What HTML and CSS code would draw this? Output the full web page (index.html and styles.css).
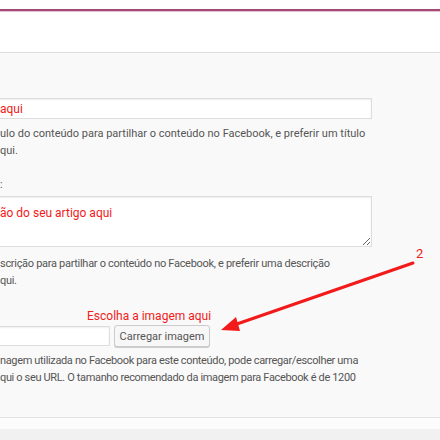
FILE: index.html
```html
<!DOCTYPE html>
<html lang="pt">
<head>
  <meta charset="UTF-8" />
  <meta name="viewport" content="width=device-width, initial-scale=1.0"/>
  <title>Facebook Open Graph</title>
  <link rel="stylesheet" href="styles.css">
</head>
<body>

  <div class="tabs">
    <div class="tab-line"></div>
  </div>

  <div class="panel">
    <div class="field field-title">
      <input type="text" class="text-input wide" value="aqui" />
      <p class="help">ulo do conteúdo para partilhar o conteúdo no Facebook, e preferir um título<br>qui.</p>
    </div>

    <div class="field field-desc">
      <label class="label">:</label>
      <textarea class="text-area">ão do seu artigo aqui</textarea>
      <p class="help">scrição para partilhar o conteúdo no Facebook, e preferir uma descrição<br>qui.</p>
    </div>

    <div class="field field-image">
      <div class="hint">Escolha a imagem aqui</div>
      <div class="upload-row">
        <input type="text" class="text-input short" />
        <button class="button">Carregar imagem</button>
      </div>
      <p class="help">nagem utilizada no Facebook para este conteúdo, pode carregar/escolher uma<br>qui o seu URL. O tamanho recomendado da imagem para Facebook é de 1200</p>
    </div>
  </div>
  <div class="footer-strip"></div>

  <!-- annotation arrow drawn over the form -->
  <div class="note">
    <span class="note-num">2</span>
    <svg class="note-arrow" width="440" height="440" viewBox="0 0 440 440">
      <line x1="413" y1="263" x2="234" y2="325" stroke="#f21a1a" stroke-width="3" stroke-linecap="round"/>
      <polygon points="221,330 236,317 240,331" fill="#f21a1a"/>
    </svg>
  </div>

</body>
</html>
```

FILE: styles.css
```css
body {
  margin: 0;
  background: #f1f1f1;
  font-family: Roboto, 'Open Sans', sans-serif;
  font-size: 11px;
  color: #555;
  overflow: hidden;
}

.tabs {
  background: #fff;
  height: 53px;
  padding-top: 9px;
  box-sizing: border-box;
  border-bottom: 1px solid #ddd;
}

.tab-line {
  height: 2px;
  background: #a24a78;
  border-bottom: 1px solid #e7bfd3;
}

.panel {
  background: #f9f9f9;
  height: 365px;
  box-sizing: border-box;
  padding-top: 45px;
  border-bottom: 1px solid #e3e3e3;
}

.field {
  margin-left: -4px;
}

.text-input {
  height: 21px;
  box-sizing: border-box;
  border: 1px solid #ddd;
  box-shadow: inset 0 1px 2px rgba(0, 0, 0, 0.07);
  background: #fff;
  font-family: inherit;
  font-size: 12px;
  color: #f21a1a;
  padding: 0 3px;
  outline: none;
}

.wide {
  display: block;
  width: 376px;
}

.short {
  width: 114px;
  height: 20px;
}

.help {
  margin: 6px 0 0 4px;
  line-height: 17px;
}

.label {
  display: block;
  margin: 18px 0 0 4px;
  height: 16px;
  line-height: 16px;
}

.text-area {
  display: block;
  margin-top: 3px;
  width: 376px;
  height: 51px;
  box-sizing: border-box;
  border: 1px solid #ddd;
  box-shadow: inset 0 1px 2px rgba(0, 0, 0, 0.07);
  background: #fff;
  font-family: inherit;
  font-size: 12px;
  color: #f21a1a;
  padding: 9px 3px;
  resize: vertical;
  outline: none;
}

.field-desc .help {
  margin-top: 8px;
  letter-spacing: -0.3px;
}

.hint {
  margin: 19px 0 0 91px;
  color: #f21a1a;
  font-size: 12px;
  line-height: 16px;
}

.upload-row {
  display: flex;
  align-items: center;
  gap: 4px;
  margin-top: 1px;
}

.button {
  width: 96px;
  height: 22px;
  padding: 0;
  border: 1px solid #ccc;
  border-radius: 3px;
  background: #f7f7f7;
  box-shadow: 0 1px 0 #ccc;
  font-family: inherit;
  font-size: 11px;
  color: #555;
  cursor: pointer;
}

.field-image .help {
  margin-top: 5px;
  letter-spacing: -0.35px;
}

.footer-strip {
  height: 11px;
  background: #fcfcfc;
}

.note {
  position: absolute;
  left: 0;
  top: 0;
  width: 440px;
  height: 440px;
  pointer-events: none;
}

.note-num {
  position: absolute;
  left: 416px;
  top: 246px;
  color: #f21a1a;
  font-size: 13px;
}

.note-arrow {
  position: absolute;
  left: 0;
  top: 0;
}
```
